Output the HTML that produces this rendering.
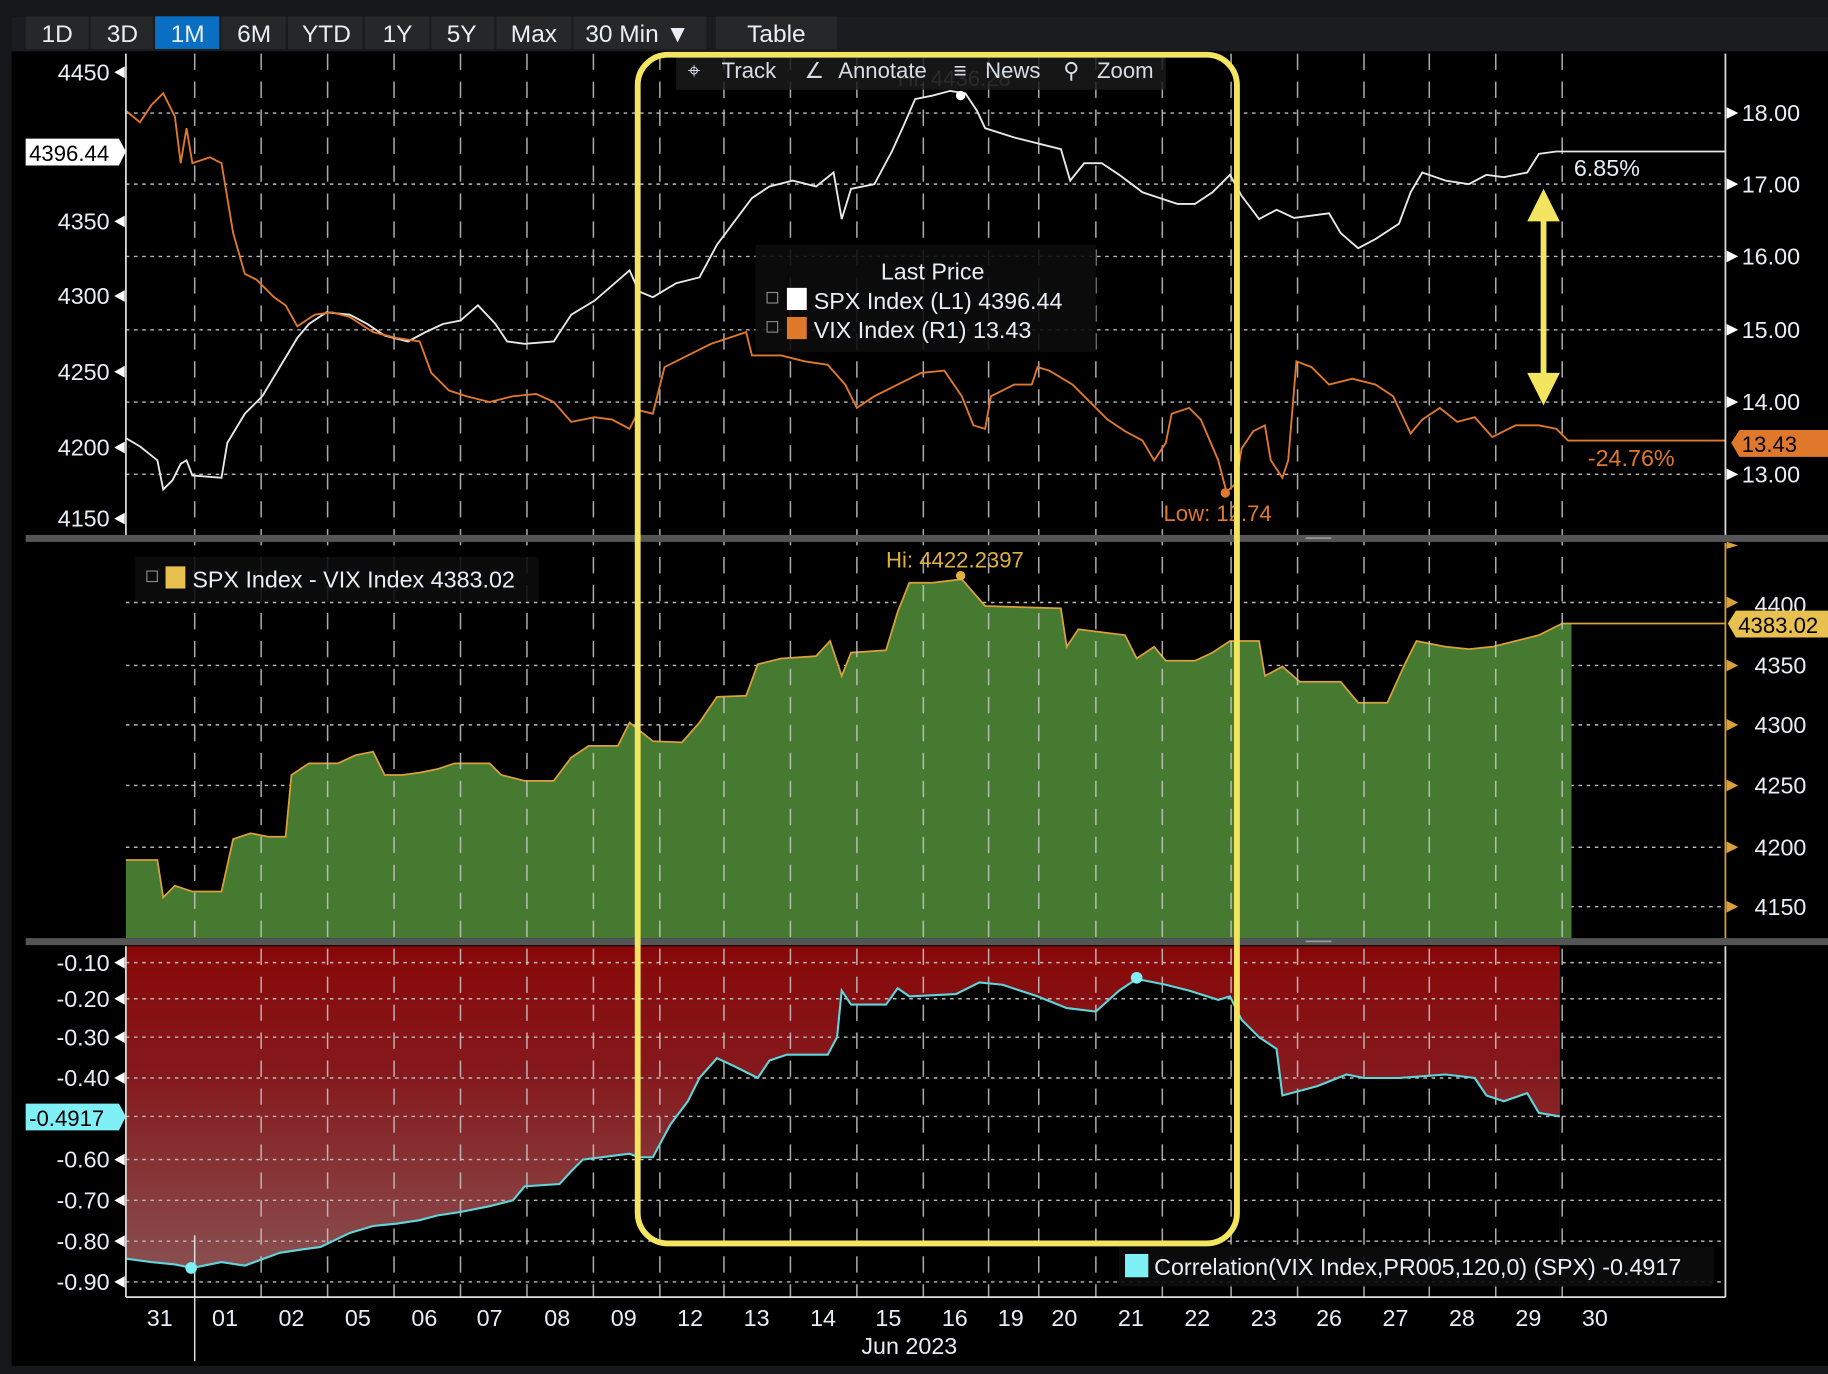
<!DOCTYPE html>
<html><head><meta charset="utf-8"><style>
html,body{margin:0;padding:0;background:#000;width:1828px;height:1374px;overflow:hidden}
svg{display:block}
text{font-family:"Liberation Sans",sans-serif}
</style></head><body>
<svg width="1828" height="1374" viewBox="0 0 1568 1179" preserveAspectRatio="none" xmlns="http://www.w3.org/2000/svg">
<defs>
<linearGradient id="rg" x1="0" y1="0" x2="0" y2="1">
<stop offset="0" stop-color="#880808"/><stop offset="0.35" stop-color="#85181c"/><stop offset="1" stop-color="#8a5757"/>
</linearGradient>
</defs>
<rect width="1568" height="1179" fill="#15171b"/>
<rect x="10" y="14" width="1558" height="1158" fill="#000"/>
<rect x="10" y="14" width="1558" height="30" fill="#1b1c1f"/>
<!-- toolbar -->
<g font-size="21" fill="#e8eef5">
<rect x="22" y="14" width="54" height="28" fill="#262729"/><text x="49" y="36" text-anchor="middle">1D</text>
<rect x="78" y="14" width="53" height="28" fill="#262729"/><text x="105" y="36" text-anchor="middle">3D</text>
<rect x="133" y="14" width="55" height="28" fill="#0a6fc2"/><text x="161" y="36" text-anchor="middle">1M</text>
<rect x="190" y="14" width="55" height="28" fill="#262729"/><text x="218" y="36" text-anchor="middle">6M</text>
<rect x="247" y="14" width="64" height="28" fill="#262729"/><text x="280" y="36" text-anchor="middle">YTD</text>
<rect x="313" y="14" width="55" height="28" fill="#262729"/><text x="341" y="36" text-anchor="middle">1Y</text>
<rect x="370" y="14" width="54" height="28" fill="#262729"/><text x="396" y="36" text-anchor="middle">5Y</text>
<rect x="426" y="14" width="64" height="28" fill="#262729"/><text x="458" y="36" text-anchor="middle">Max</text>
<rect x="492" y="14" width="114" height="28" fill="#262729"/><text x="502" y="36">30 Min ▼</text>
<rect x="614" y="14" width="104" height="28" fill="#262729"/><text x="666" y="36" text-anchor="middle">Table</text>
</g>
<!-- top panel grid -->
<g stroke="#bbb" stroke-width="1.2" stroke-dasharray="3,4">
<line x1="108" y1="97" x2="1480" y2="97"/><line x1="108" y1="158" x2="1480" y2="158"/><line x1="108" y1="220" x2="1480" y2="220"/><line x1="108" y1="283" x2="1480" y2="283"/><line x1="108" y1="345" x2="1480" y2="345"/><line x1="108" y1="407" x2="1480" y2="407"/>
<line x1="108" y1="517" x2="1480" y2="517"/><line x1="108" y1="571" x2="1480" y2="571"/><line x1="108" y1="622" x2="1480" y2="622"/><line x1="108" y1="674" x2="1480" y2="674"/><line x1="108" y1="727" x2="1480" y2="727"/><line x1="108" y1="778" x2="1480" y2="778"/>
</g>
<!-- middle green area -->
<polygon fill="#467a30" stroke="none" points="108,738 135,738 140,770 150,760 165,765 190,765 200,720 215,715 230,718 245,718 250,665 265,655 290,655 305,648 320,645 330,665 345,665 360,663 375,660 390,655 420,655 430,665 450,670 475,670 490,650 505,640 530,640 540,620 560,636 585,637 600,620 615,598 640,597 650,570 670,565 700,563 712,550 722,580 730,560 760,558 770,525 780,500 800,500 825,497 845,520 910,522 915,555 925,540 965,545 975,565 990,555 1000,567 1025,567 1040,560 1055,550 1080,550 1085,580 1100,572 1115,585 1150,585 1165,603 1190,603 1205,570 1215,550 1240,555 1260,557 1280,555 1300,550 1320,545 1340,535 1348,535 1348,805 108,805"/>
<polyline fill="none" stroke="#d9a13a" stroke-width="1.5" points="108,738 135,738 140,770 150,760 165,765 190,765 200,720 215,715 230,718 245,718 250,665 265,655 290,655 305,648 320,645 330,665 345,665 360,663 375,660 390,655 420,655 430,665 450,670 475,670 490,650 505,640 530,640 540,620 560,636 585,637 600,620 615,598 640,597 650,570 670,565 700,563 712,550 722,580 730,560 760,558 770,525 780,500 800,500 825,497 845,520 910,522 915,555 925,540 965,545 975,565 990,555 1000,567 1025,567 1040,560 1055,550 1080,550 1085,580 1100,572 1115,585 1150,585 1165,603 1190,603 1205,570 1215,550 1240,555 1260,557 1280,555 1300,550 1320,545 1340,535 1480,535"/>
<!-- bottom red -->
<rect x="108" y="812" width="1230" height="301" fill="url(#rg)"/>
<polygon fill="#000" points="108,1080 130,1083 150,1085 165,1088 190,1083 210,1086 240,1075 260,1072 275,1070 300,1058 320,1052 340,1050 360,1047 375,1043 395,1040 420,1035 440,1030 450,1018 480,1016 490,1005 500,995 540,990 548,993 560,993 575,965 590,945 600,925 615,908 630,915 650,925 660,910 675,905 710,905 718,890 722,850 730,862 760,862 770,848 780,855 820,853 840,843 860,845 890,855 915,865 940,868 960,850 975,840 1000,845 1020,850 1045,858 1055,855 1065,875 1080,890 1095,900 1100,940 1130,932 1155,922 1170,925 1200,925 1240,922 1265,925 1275,940 1290,945 1310,938 1320,955 1338,958 1338,1113 108,1113"/>
<g stroke="#bbb" stroke-width="1.2" stroke-dasharray="3,4">
<line x1="108" y1="826" x2="1480" y2="826"/><line x1="108" y1="857" x2="1480" y2="857"/><line x1="108" y1="890" x2="1480" y2="890"/><line x1="108" y1="925" x2="1480" y2="925"/><line x1="108" y1="958" x2="1480" y2="958"/><line x1="108" y1="995" x2="1480" y2="995"/><line x1="108" y1="1030" x2="1480" y2="1030"/><line x1="108" y1="1065" x2="1480" y2="1065"/><line x1="108" y1="1100" x2="1480" y2="1100"/>
</g>
<!-- vertical dashed -->
<g stroke="#c8c8c8" stroke-width="1.3" stroke-dasharray="14,10" opacity="0.85">
<line x1="224" y1="46" x2="224" y2="1113"/><line x1="281" y1="46" x2="281" y2="1113"/><line x1="338" y1="46" x2="338" y2="1113"/><line x1="395" y1="46" x2="395" y2="1113"/><line x1="452" y1="46" x2="452" y2="1113"/><line x1="509" y1="46" x2="509" y2="1113"/><line x1="566" y1="46" x2="566" y2="1113"/><line x1="621" y1="46" x2="621" y2="1113"/><line x1="678" y1="46" x2="678" y2="1113"/><line x1="735" y1="46" x2="735" y2="1113"/><line x1="792" y1="46" x2="792" y2="1113"/><line x1="848" y1="46" x2="848" y2="1113"/><line x1="891" y1="46" x2="891" y2="1113"/><line x1="940" y1="46" x2="940" y2="1113"/><line x1="997" y1="46" x2="997" y2="1113"/><line x1="1056" y1="46" x2="1056" y2="1113"/><line x1="1113" y1="46" x2="1113" y2="1113"/><line x1="1170" y1="46" x2="1170" y2="1113"/><line x1="1226" y1="46" x2="1226" y2="1113"/><line x1="1283" y1="46" x2="1283" y2="1113"/><line x1="1340" y1="46" x2="1340" y2="1113"/>
<line x1="167" y1="46" x2="167" y2="805"/>
</g>
<line x1="167" y1="1060" x2="167" y2="1168" stroke="#ddd" stroke-width="1.3"/>
<!-- correlation line -->
<polyline fill="none" stroke="#5fd6dc" stroke-width="1.8" points="108,1080 130,1083 150,1085 165,1088 190,1083 210,1086 240,1075 260,1072 275,1070 300,1058 320,1052 340,1050 360,1047 375,1043 395,1040 420,1035 440,1030 450,1018 480,1016 490,1005 500,995 540,990 548,993 560,993 575,965 590,945 600,925 615,908 630,915 650,925 660,910 675,905 710,905 718,890 722,850 730,862 760,862 770,848 780,855 820,853 840,843 860,845 890,855 915,865 940,868 960,850 975,840 1000,845 1020,850 1045,858 1055,855 1065,875 1080,890 1095,900 1100,940 1130,932 1155,922 1170,925 1200,925 1240,922 1265,925 1275,940 1290,945 1310,938 1320,955 1338,958"/>
<circle cx="164" cy="1088" r="5" fill="#7ff0f5"/><circle cx="975" cy="839" r="5" fill="#7ff0f5"/>
<!-- top lines -->
<polyline fill="none" stroke="#e8e8e8" stroke-width="1.6" points="108,376 120,383 135,395 140,420 148,412 155,398 160,395 165,408 190,410 195,380 210,355 225,340 240,315 255,290 265,278 280,268 300,270 315,278 330,288 350,293 365,285 380,278 395,275 410,262 425,278 435,293 450,295 475,293 490,270 510,258 525,245 540,232 548,250 560,255 580,243 600,238 615,210 630,190 645,170 660,160 680,155 700,160 715,148 722,188 730,162 750,158 765,130 775,108 785,85 800,82 815,78 828,80 838,95 845,110 870,118 910,128 918,155 930,140 945,140 960,150 980,165 995,170 1010,175 1025,175 1040,165 1055,150 1065,168 1080,188 1095,180 1110,187 1140,183 1150,200 1165,213 1180,205 1200,192 1210,165 1220,148 1240,155 1260,158 1275,150 1290,152 1310,148 1320,132 1335,130 1480,130"/>
<polyline fill="none" stroke="#e0782c" stroke-width="1.6" points="108,95 120,105 130,90 140,80 150,100 155,140 160,110 165,140 180,135 190,140 200,200 210,235 220,240 235,255 245,262 255,280 270,270 285,268 300,272 320,285 340,290 360,293 370,320 385,335 400,340 420,345 440,340 460,338 475,345 490,362 510,358 525,360 540,368 548,352 560,355 570,315 590,305 610,295 625,290 640,285 645,305 670,305 690,310 710,313 725,330 735,350 750,340 770,330 790,320 810,318 825,340 835,365 845,368 850,340 870,330 885,330 890,315 900,318 920,330 935,345 950,360 965,370 980,378 990,395 1000,380 1005,355 1020,350 1030,360 1045,395 1052,422 1060,415 1065,385 1075,370 1085,365 1090,395 1100,410 1105,395 1112,310 1125,315 1140,330 1160,325 1180,330 1195,340 1210,372 1220,360 1235,350 1250,362 1265,358 1280,375 1300,365 1320,365 1335,368 1345,378 1480,378"/>
<circle cx="1051" cy="423" r="4" fill="#e0782c"/>
<circle cx="824" cy="82" r="4" fill="#fff"/>
<text x="998" y="447" font-size="19" fill="#e0782c">Low: 12.74</text>
<text x="770" y="74" font-size="19" fill="#888">Hi: 4436.28</text>
<text x="760" y="487" font-size="19" fill="#e0b040">Hi: 4422.2397</text>
<circle cx="824" cy="494" r="4" fill="#e0b040"/>
<text x="1350" y="151" font-size="20" fill="#e8eef5">6.85%</text>
<text x="1362" y="400" font-size="20" fill="#e0782c">-24.76%</text>
<!-- separators -->
<rect x="22" y="459" width="1546" height="6" fill="#555"/>
<rect x="22" y="805" width="1546" height="6" fill="#555"/>
<rect x="1120" y="461" width="22" height="1.5" fill="#999"/><rect x="1120" y="807" width="22" height="1.5" fill="#999"/>
<!-- axes -->
<g stroke="#ddd" stroke-width="1.5">
<line x1="108" y1="46" x2="108" y2="459"/><line x1="1480" y1="46" x2="1480" y2="459"/>
<line x1="108" y1="812" x2="108" y2="1113"/><line x1="108" y1="1113" x2="1480" y2="1113"/><line x1="1480" y1="812" x2="1480" y2="1113"/>
</g>
<line x1="1480" y1="466" x2="1480" y2="805" stroke="#d9a13a" stroke-width="1.5"/>
<!-- axis labels -->
<g font-size="20" fill="#e8eef5">
<text x="94" y="69" text-anchor="end">4450</text><text x="94" y="197" text-anchor="end">4350</text><text x="94" y="261" text-anchor="end">4300</text><text x="94" y="326" text-anchor="end">4250</text><text x="94" y="391" text-anchor="end">4200</text><text x="94" y="452" text-anchor="end">4150</text>
<text x="1494" y="104">18.00</text><text x="1494" y="165">17.00</text><text x="1494" y="227">16.00</text><text x="1494" y="290">15.00</text><text x="1494" y="352">14.00</text><text x="1494" y="414">13.00</text>
<text x="1505" y="526">4400</text><text x="1505" y="578">4350</text><text x="1505" y="629">4300</text><text x="1505" y="681">4250</text><text x="1505" y="734">4200</text><text x="1505" y="785">4150</text>
<text x="94" y="833" text-anchor="end">-0.10</text><text x="94" y="864" text-anchor="end">-0.20</text><text x="94" y="897" text-anchor="end">-0.30</text><text x="94" y="932" text-anchor="end">-0.40</text><text x="94" y="1002" text-anchor="end">-0.60</text><text x="94" y="1037" text-anchor="end">-0.70</text><text x="94" y="1072" text-anchor="end">-0.80</text><text x="94" y="1107" text-anchor="end">-0.90</text>
</g>
<g fill="#fff">
<path d="M98,62 l9,-5 v10z M98,190 l9,-5 v10z M98,254 l9,-5 v10z M98,319 l9,-5 v10z M98,384 l9,-5 v10z M98,445 l9,-5 v10z"/>
<path d="M98,826 l9,-5 v10z M98,857 l9,-5 v10z M98,890 l9,-5 v10z M98,925 l9,-5 v10z M98,995 l9,-5 v10z M98,1030 l9,-5 v10z M98,1065 l9,-5 v10z M98,1100 l9,-5 v10z"/>
<path d="M1491,97 l-10,-5 v10z M1491,158 l-10,-5 v10z M1491,220 l-10,-5 v10z M1491,283 l-10,-5 v10z M1491,345 l-10,-5 v10z M1491,407 l-10,-5 v10z"/>
</g>
<g fill="#d9a13a"><path d="M1491,571 l-10,-5 v10z M1491,622 l-10,-5 v10z M1491,674 l-10,-5 v10z M1491,727 l-10,-5 v10z M1491,778 l-10,-5 v10z M1491,517 l-10,-5 v10z M1491,468 l-10,-3 v6z"/></g>
<g font-size="20" fill="#e8eef5" text-anchor="middle">
<text x="137" y="1138">31</text><text x="193" y="1138">01</text><text x="250" y="1138">02</text><text x="307" y="1138">05</text><text x="364" y="1138">06</text><text x="420" y="1138">07</text><text x="478" y="1138">08</text><text x="535" y="1138">09</text><text x="592" y="1138">12</text><text x="649" y="1138">13</text><text x="706" y="1138">14</text><text x="762" y="1138">15</text><text x="819" y="1138">16</text><text x="867" y="1138">19</text><text x="913" y="1138">20</text><text x="970" y="1138">21</text><text x="1027" y="1138">22</text><text x="1084" y="1138">23</text><text x="1140" y="1138">26</text><text x="1197" y="1138">27</text><text x="1254" y="1138">28</text><text x="1311" y="1138">29</text><text x="1368" y="1138">30</text>
<text x="780" y="1162">Jun 2023</text>
</g>
<!-- value tags -->
<path d="M22,119 H102 L108,130 L102,142 H22z" fill="#fff"/><text x="25" y="138" font-size="19" fill="#000">4396.44</text>
<path d="M22,947 H102 L108,958 L102,970 H22z" fill="#7ff0f5"/><text x="25" y="966" font-size="19" fill="#000">-0.4917</text>
<path d="M1492,369 H1568 V392 H1492 L1485,380z" fill="#e0782c"/><text x="1494" y="388" font-size="19" fill="#000">13.43</text>
<path d="M1489,524 H1568 V547 H1489 L1482,535z" fill="#e8c050"/><text x="1491" y="543" font-size="19" fill="#000">4383.02</text>
<!-- legends -->
<rect x="648" y="210" width="292" height="92" fill="#0c0c0c" opacity="0.9"/>
<text x="800" y="240" font-size="20" fill="#e8eef5" text-anchor="middle">Last Price</text>
<rect x="658" y="251" width="9" height="9" fill="none" stroke="#888"/><rect x="675" y="247" width="17" height="19" fill="#fff"/>
<text x="698" y="265" font-size="20" fill="#e8eef5">SPX Index  (L1) 4396.44</text>
<rect x="658" y="276" width="9" height="9" fill="none" stroke="#888"/><rect x="675" y="272" width="17" height="19" fill="#e0782c"/>
<text x="698" y="290" font-size="20" fill="#e8eef5">VIX Index  (R1)     13.43</text>
<rect x="116" y="478" width="346" height="38" fill="#0c0c0c" opacity="0.9"/>
<rect x="126" y="490" width="9" height="9" fill="none" stroke="#888"/><rect x="142" y="486" width="17" height="19" fill="#e8c050"/>
<text x="165" y="504" font-size="20" fill="#e8eef5">SPX Index - VIX Index 4383.02</text>
<rect x="960" y="1070" width="510" height="34" fill="#0c0c0c" opacity="0.9"/>
<rect x="965" y="1076" width="20" height="20" fill="#7ff0f5"/>
<text x="990" y="1094" font-size="20" fill="#e8eef5">Correlation(VIX Index,PR005,120,0) (SPX) -0.4917</text>
<!-- track toolbar -->
<rect x="580" y="47" width="420" height="30" fill="#1a1a1a" opacity="0.85"/>
<g font-size="19" fill="#d8dde5"><text x="590" y="67">⌖</text><text x="619" y="67">Track</text><text x="690" y="67">∠</text><text x="719" y="67">Annotate</text><text x="818" y="67">≡</text><text x="845" y="67">News</text><text x="912" y="67">⚲</text><text x="941" y="67">Zoom</text></g>
<!-- yellow highlight -->
<rect x="547" y="47" width="514" height="1020" rx="26" ry="26" fill="none" stroke="#f3e55f" stroke-width="5"/>
<line x1="1324" y1="185" x2="1324" y2="325" stroke="#f3e55f" stroke-width="5"/>
<path d="M1310,190 L1324,162 L1338,190z M1310,320 L1324,348 L1338,320z" fill="#f3e55f"/>
</svg>
</body></html>
